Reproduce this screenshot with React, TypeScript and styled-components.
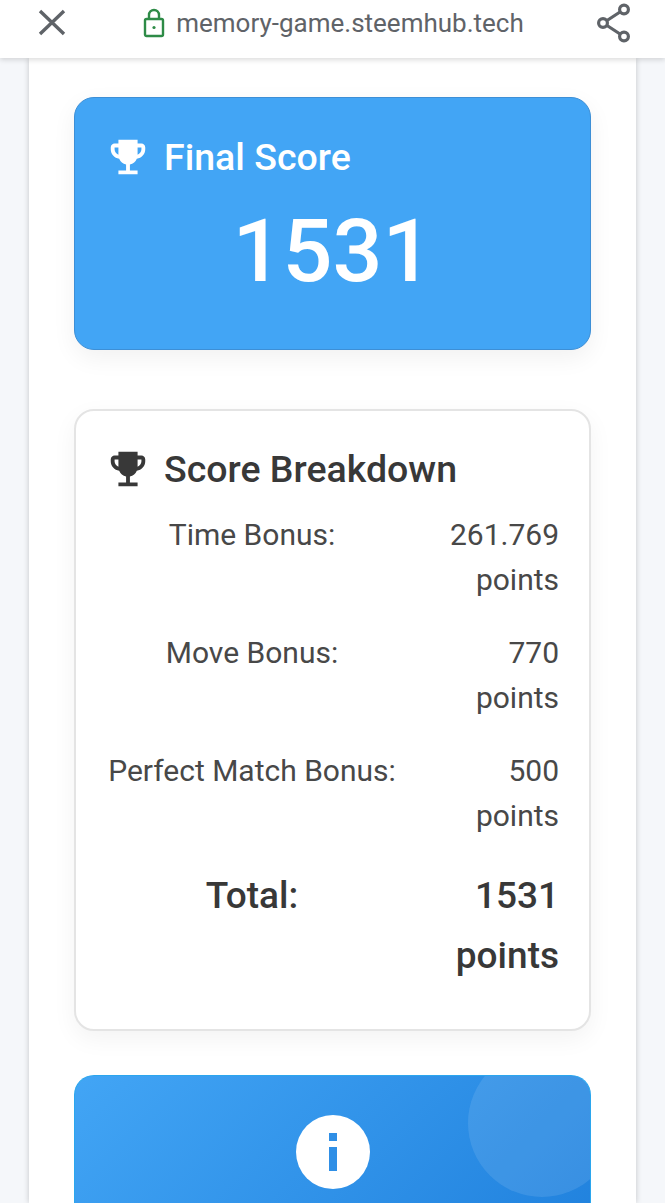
import styled, { createGlobalStyle } from "styled-components"
import { MdEmojiEvents } from "react-icons/md"

const GlobalStyle = createGlobalStyle`
    html, body {
        margin: 0;
        height: 1203px;
        overflow: hidden;
        background: #f5f7fa;
        font-family: Roboto, "Liberation Sans", sans-serif;
    }
`

const rows = [
    { label: "Time Bonus:", value: "261.769" },
    { label: "Move Bonus:", value: "770" },
    { label: "Perfect Match Bonus:", value: "500" },
]

export default function App() {
    return (
        <Page>
            <GlobalStyle />
            <Toolbar>
                <svg width="30" height="30" viewBox="0 0 30 30" fill="none" stroke="#5f6368" strokeWidth="3.4">
                    <path d="M3 3 L27 26 M27 3 L3 26" />
                </svg>
                <Address>
                    <svg width="22" height="30" viewBox="0 0 22 30" fill="none" stroke="#2e8b47" strokeWidth="2.4">
                        <rect x="2" y="11" width="18" height="17" rx="1.5" />
                        <path d="M6 11 V7 a5 5 0 0 1 10 0 V11" />
                        <circle cx="11" cy="19.5" r="1.6" fill="#2e8b47" stroke="none" />
                    </svg>
                    <Url>memory-game.steemhub.tech</Url>
                </Address>
                <svg width="36" height="40" viewBox="0 0 36 40" fill="none" stroke="#5f6368" strokeWidth="3.2">
                    <circle cx="28" cy="6.5" r="4.4" />
                    <circle cx="7" cy="20" r="4.4" />
                    <circle cx="28" cy="33.5" r="4.4" />
                    <path d="M11 17.5 L24 9 M11 22.5 L24 31" />
                </svg>
            </Toolbar>
            <Sheet>
                <ScoreCard>
                    <Heading>
                        <MdEmojiEvents size={46} />
                        <HeadingText>Final Score</HeadingText>
                    </Heading>
                    <BigScore>1531</BigScore>
                </ScoreCard>
                <BreakdownCard>
                    <Heading>
                        <MdEmojiEvents size={46} />
                        <HeadingText>Score Breakdown</HeadingText>
                    </Heading>
                    <ScoreTable>
                        {rows.map((row) => (
                            <ScoreRow key={row.label}>
                                <RowLabel>{row.label}</RowLabel>
                                <RowValue>{row.value} points</RowValue>
                            </ScoreRow>
                        ))}
                        <TotalRow>
                            <TotalLabel>Total:</TotalLabel>
                            <TotalValue>1531 points</TotalValue>
                        </TotalRow>
                    </ScoreTable>
                </BreakdownCard>
                <InfoCard>
                    <Bubble />
                    <InfoCircle>
                        <svg width="14" height="38" viewBox="0 0 14 38" fill="#2f8fe6">
                            <rect x="3" y="0" width="8" height="8" />
                            <rect x="3" y="14" width="8" height="24" />
                        </svg>
                    </InfoCircle>
                </InfoCard>
            </Sheet>
        </Page>
    )
}

const Page = styled.div`
    height: 1203px;
    overflow: hidden;
`
const Toolbar = styled.div`
    position: relative;
    z-index: 2;
    height: 58px;
    box-sizing: border-box;
    padding: 0 33px 13px 37px;
    display: flex;
    align-items: center;
    justify-content: space-between;
    background: #ffffff;
    box-shadow: 0 2px 5px rgba(0, 0, 0, 0.14);
`
const Address = styled.div`
    display: flex;
    align-items: center;
    gap: 11px;
    margin-left: 4px;
`
const Url = styled.span`
    font-size: 26px;
    color: #5f6368;
`
const Sheet = styled.div`
    margin: 0 29px;
    height: 1145px;
    box-sizing: border-box;
    padding: 39px 45px 0;
    display: flex;
    flex-direction: column;
    gap: 59px;
    background: #ffffff;
    box-shadow: 0 0 6px rgba(0, 0, 0, 0.2);
`
const ScoreCard = styled.div`
    height: 253px;
    flex-shrink: 0;
    box-sizing: border-box;
    padding: 35px 34px 0;
    border: 1px solid #3d8fd6;
    border-radius: 20px;
    background: #42a5f5;
    color: #ffffff;
    box-shadow: 0 8px 24px rgba(0, 0, 0, 0.06);
`
const Heading = styled.div`
    display: flex;
    align-items: center;
    gap: 13px;
    margin-left: -4px;
    height: 47px;
`
const HeadingText = styled.span`
    font-size: 37.5px;
    font-weight: 500;
`
const BigScore = styled.div`
    margin-top: 21px;
    text-align: center;
    font-size: 88px;
    font-weight: 500;
    line-height: 100px;
`
const BreakdownCard = styled.div`
    height: 622px;
    flex-shrink: 0;
    box-sizing: border-box;
    padding: 34px 30px 0 33px;
    border: 2px solid #e4e4e4;
    border-radius: 20px;
    background: #ffffff;
    color: #383838;
    box-shadow: 0 8px 24px rgba(0, 0, 0, 0.05);
`
const ScoreTable = styled.div`
    margin: 15px 0 0 -1px;
    display: flex;
    flex-direction: column;
`
const ScoreRow = styled.div`
    display: grid;
    grid-template-columns: 288px 1fr;
    height: 118px;
    font-size: 30px;
    line-height: 45px;
    padding-top: 5px;
    box-sizing: border-box;
    color: #484848;
`
const RowLabel = styled.div`
    text-align: center;
`
const RowValue = styled.div`
    text-align: right;
    margin-left: 40px;
`
const TotalRow = styled.div`
    display: grid;
    grid-template-columns: 288px 1fr;
    margin-top: 5px;
    font-size: 37px;
    font-weight: 500;
    line-height: 60px;
`
const TotalLabel = styled.div`
    text-align: center;
`
const TotalValue = styled.div`
    text-align: right;
    margin-left: 40px;
`
const InfoCard = styled.div`
    position: relative;
    height: 200px;
    flex-shrink: 0;
    margin-top: -15px;
    box-sizing: border-box;
    overflow: hidden;
    padding-top: 39px;
    display: flex;
    justify-content: center;
    align-items: flex-start;
    border: 1px solid #2ba6ee;
    border-bottom: none;
    border-radius: 20px 20px 0 0;
    background: linear-gradient(135deg, #42a5f5, #1e7fdc);
`
const Bubble = styled.div`
    position: absolute;
    top: -27px;
    right: -26px;
    width: 148px;
    height: 148px;
    border-radius: 50%;
    background: rgba(255, 255, 255, 0.1);
`
const InfoCircle = styled.div`
    position: relative;
    width: 74px;
    height: 74px;
    border-radius: 50%;
    background: #ffffff;
    display: flex;
    align-items: center;
    justify-content: center;
`
